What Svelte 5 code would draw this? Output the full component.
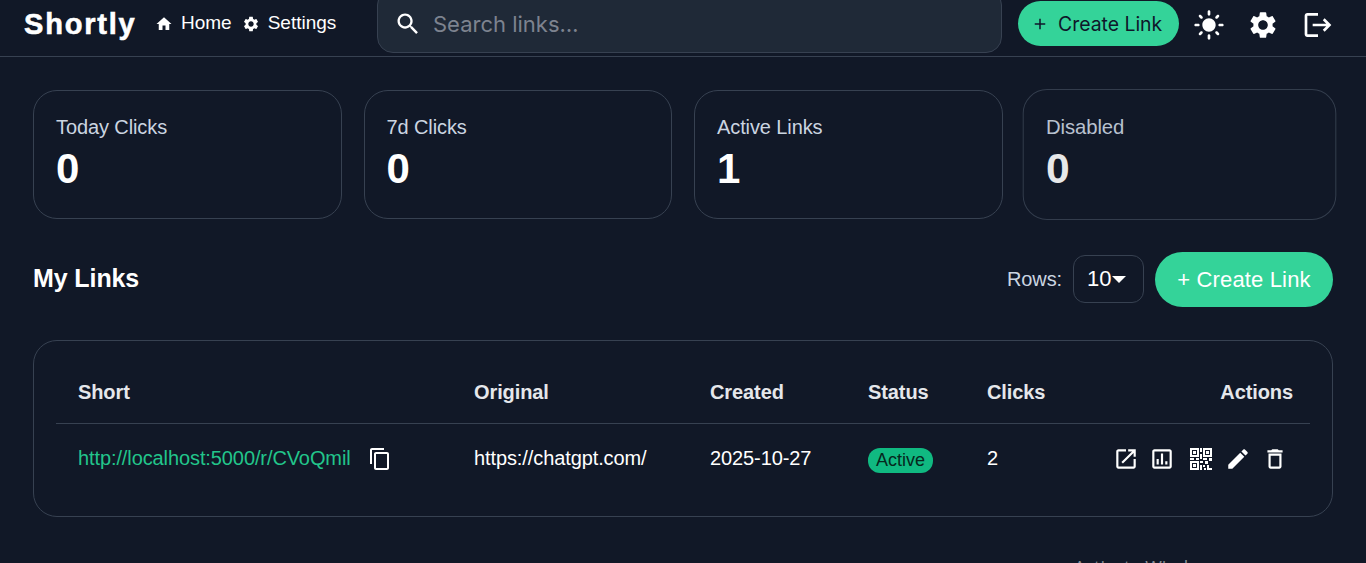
<script>
  const stats = [
    { label: "Today Clicks", value: 0 },
    { label: "7d Clicks", value: 0 },
    { label: "Active Links", value: 1 },
    { label: "Disabled", value: 0 },
  ];

  const gear =
    "M19.14 12.94c.04-.3.06-.61.06-.94 0-.32-.02-.64-.07-.94l2.03-1.58c.18-.14.23-.41.12-.61l-1.92-3.32c-.12-.22-.37-.29-.59-.22l-2.39.96c-.5-.38-1.03-.7-1.62-.94l-.36-2.54c-.04-.24-.24-.41-.48-.41h-3.84c-.24 0-.43.17-.47.41l-.36 2.54c-.59.24-1.13.57-1.62.94l-2.39-.96c-.22-.08-.47 0-.59.22L2.74 8.87c-.12.21-.08.47.12.61l2.03 1.58c-.05.3-.09.63-.09.94s.02.64.07.94l-2.03 1.58c-.18.14-.23.41-.12.61l1.92 3.32c.12.22.37.29.59.22l2.39-.96c.5.38 1.03.7 1.62.94l.36 2.54c.05.24.24.41.48.41h3.84c.24 0 .44-.17.47-.41l.36-2.54c.59-.24 1.13-.56 1.62-.94l2.39.96c.22.08.47 0 .59-.22l1.92-3.32c.12-.22.07-.47-.12-.61l-2.01-1.58zM12 15.6c-1.98 0-3.6-1.62-3.6-3.6s1.62-3.6 3.6-3.6 3.6 1.62 3.6 3.6-1.62 3.6-3.6 3.6z";

  const actions = [
    { box: "0 0 24 24", d: "M19 19H5V5h7V3H5c-1.11 0-2 .9-2 2v14c0 1.1.89 2 2 2h14c1.1 0 2-.9 2-2v-7h-2v7zM14 3v2h3.59l-9.83 9.83 1.41 1.41L19 6.41V10h2V3h-7z" },
    { box: "0 0 24 24", d: "M19 3H5c-1.1 0-2 .9-2 2v14c0 1.1.9 2 2 2h14c1.1 0 2-.9 2-2V5c0-1.1-.9-2-2-2zm0 16H5V5h14v14zM9 17H7v-5h2v5zm4 0h-2V7h2v10zm4 0h-2v-3h2v3z" },
    { box: "-1 -1 26 26", d: "M1 1h9v9H1V1zm2 2v5h5V3H3zm1 1h3v3H4V4zM14 1h9v9h-9V1zm2 2v5h5V3h-5zm1 1h3v3h-3V4zM1 14h9v9H1v-9zm2 2v5h5v-5H3zm1 1h3v3H4v-3zM11 1h2v4h-2V1zM11 7h2v5h-2V7zM1 11h4v2H1v-2zM7 11h3v2H7v-2zM14 11h4v2h-4v-2zM20 11h3v3h-3v-3zM11 14h3v2h-3v-2zM16 14h3v3h-3v-3zM11 18h2v5h-2v-5zM14 18h2v2h-2v-2zM18 18h2v3h3v2h-5v-5zM15 21h2v2h-2v-2z" },
    { box: "0 0 24 24", d: "M3 17.25V21h3.75L17.81 9.94l-3.75-3.75L3 17.25zM20.71 7.04c.39-.39.39-1.02 0-1.41l-2.34-2.34c-.39-.39-1.02-.39-1.41 0l-1.83 1.83 3.75 3.75 1.83-1.83z" },
    { box: "0 0 24 24", d: "M6 19c0 1.1.9 2 2 2h8c1.1 0 2-.9 2-2V7H6v12zM8 9h8v10H8V9zm7.5-5l-1-1h-5l-1 1H5v2h14V4z" },
  ];
</script>

<div class="page">
  <header class="topbar">
    <div class="brand">Shortly</div>
    <nav class="nav">
      <a href="#home">
        <svg viewBox="0 0 24 24" class="nav-icon"><path d="M10 20v-6h4v6h5v-8h3L12 3 2 12h3v8z" /></svg>
        Home
      </a>
      <a href="#settings">
        <svg viewBox="0 0 24 24" class="nav-icon"><path d={gear} /></svg>
        Settings
      </a>
    </nav>
    <div class="search">
      <svg viewBox="0 0 24 24" class="search-icon">
        <path d="M15.5 14h-.79l-.28-.27C15.41 12.59 16 11.11 16 9.5 16 5.91 13.09 3 9.5 3S3 5.91 3 9.5 5.91 16 9.5 16c1.61 0 3.09-.59 4.23-1.57l.27.28v.79l5 4.99L20.49 19l-4.99-5zm-6 0C7.01 14 5 11.99 5 9.5S7.01 5 9.5 5 14 7.01 14 9.5 11.99 14 9.5 14z" />
      </svg>
      <span>Search links…</span>
    </div>
    <button class="top-create" type="button">
      <svg viewBox="0 0 24 24"><path d="M19 13h-6v6h-2v-6H5v-2h6V5h2v6h6v2z" /></svg>
      Create Link
    </button>
    <div class="top-icons">
      <svg viewBox="0 0 24 24">
        <path d="M12 7c-2.76 0-5 2.24-5 5s2.24 5 5 5 5-2.24 5-5-2.24-5-5-5zM2 13h2c.55 0 1-.45 1-1s-.45-1-1-1H2c-.55 0-1 .45-1 1s.45 1 1 1zm18 0h2c.55 0 1-.45 1-1s-.45-1-1-1h-2c-.55 0-1 .45-1 1s.45 1 1 1zM11 2v2c0 .55.45 1 1 1s1-.45 1-1V2c0-.55-.45-1-1-1s-1 .45-1 1zm0 18v2c0 .55.45 1 1 1s1-.45 1-1v-2c0-.55-.45-1-1-1s-1 .45-1 1zM5.99 4.58c-.39-.39-1.03-.39-1.41 0-.39.39-.39 1.03 0 1.41l1.06 1.06c.39.39 1.03.39 1.41 0s.39-1.03 0-1.41L5.99 4.58zm12.37 12.37c-.39-.39-1.03-.39-1.41 0-.39.39-.39 1.03 0 1.41l1.06 1.06c.39.39 1.03.39 1.41 0 .39-.39.39-1.03 0-1.41l-1.06-1.06zm1.06-10.96c.39-.39.39-1.03 0-1.41-.39-.39-1.03-.39-1.41 0l-1.06 1.06c-.39.39-.39 1.03 0 1.41s1.03.39 1.41 0l1.06-1.06zM7.05 18.36c.39-.39.39-1.03 0-1.41-.39-.39-1.03-.39-1.41 0l-1.06 1.06c-.39.39-.39 1.03 0 1.41s1.03.39 1.41 0l1.06-1.06z" />
      </svg>
      <svg viewBox="0 0 24 24"><path d={gear} /></svg>
      <svg viewBox="0 0 24 24">
        <path d="M17 7l-1.41 1.41L18.17 11H8v2h10.17l-2.58 2.58L17 17l5-5zM4 5h8V3H4c-1.1 0-2 .9-2 2v14c0 1.1.9 2 2 2h8v-2H4V5z" />
      </svg>
    </div>
  </header>

  <main class="content">
    <section class="stats">
      {#each stats as stat}
        <div class="stat">
          <div class="stat-label">{stat.label}</div>
          <div class="stat-value">{stat.value}</div>
        </div>
      {/each}
    </section>

    <section class="toolbar">
      <h2>My Links</h2>
      <div class="toolbar-right">
        <span class="rows-label">Rows:</span>
        <div class="rows-select">10<span class="caret"></span></div>
        <button class="create" type="button">+ Create Link</button>
      </div>
    </section>

    <section class="table-card">
      <table>
        <colgroup>
          <col style="width: 396px" />
          <col style="width: 236px" />
          <col style="width: 158px" />
          <col style="width: 119px" />
          <col style="width: 100px" />
          <col />
        </colgroup>
        <thead>
          <tr>
            <th>Short</th>
            <th>Original</th>
            <th>Created</th>
            <th>Status</th>
            <th>Clicks</th>
            <th class="right">Actions</th>
          </tr>
        </thead>
        <tbody>
          <tr>
            <td>
              <div class="short">
                <a href="#short">http://localhost:5000/r/CVoQmil</a>
                <svg viewBox="0 0 24 24" class="copy">
                  <path d="M16 1H4c-1.1 0-2 .9-2 2v14h2V3h12V1zm3 4H8c-1.1 0-2 .9-2 2v14c0 1.1.9 2 2 2h11c1.1 0 2-.9 2-2V7c0-1.1-.9-2-2-2zm0 16H8V7h11v14z" />
                </svg>
              </div>
            </td>
            <td>https://chatgpt.com/</td>
            <td>2025-10-27</td>
            <td><span class="badge">Active</span></td>
            <td>2</td>
            <td>
              <div class="actions">
                {#each actions as icon}
                  <svg viewBox={icon.box}><path d={icon.d} /></svg>
                {/each}
              </div>
            </td>
          </tr>
        </tbody>
      </table>
    </section>
  </main>

  <div class="watermark">Activate Windows</div>
</div>

<style>
  :global(body) {
    margin: 0;
    background: #111827;
  }

  .page {
    position: relative;
    height: 563px;
    overflow: hidden;
    background: #111827;
    color: #fff;
    font-family: "Liberation Sans", Arial, sans-serif;
    font-size: 20px;
    letter-spacing: -0.1px;
  }

  svg {
    fill: currentColor;
    display: block;
    flex: none;
  }

  .topbar {
    display: flex;
    align-items: flex-end;
    height: 56px;
    box-sizing: content-box;
    border-bottom: 1px solid #374151;
    padding-left: 24px;
  }

  .brand {
    width: 131px;
    align-self: flex-start;
    margin-top: 7px;
    font-size: 29px;
    line-height: 34px;
    font-weight: 700;
    letter-spacing: 1.8px;
    -webkit-text-stroke: 0.6px #fff;
  }

  .nav {
    display: flex;
    gap: 10px;
    align-self: flex-start;
    margin-top: 13px;
    width: 222px;
    font-size: 19px;
    letter-spacing: 0;
  }

  .nav a {
    display: flex;
    align-items: center;
    gap: 8px;
    color: #fff;
    text-decoration: none;
    line-height: 20px;
  }

  .nav-icon {
    width: 18px;
    height: 18px;
    margin-top: 2px;
  }

  .search {
    display: flex;
    align-items: center;
    gap: 11px;
    box-sizing: border-box;
    width: 625px;
    height: 64px;
    margin-bottom: 3px;
    padding: 5px 16px 0;
    background: #1f2937;
    border: 1px solid #374151;
    border-radius: 16px;
    font-family: Inter, sans-serif;
    font-size: 22px;
    letter-spacing: 0;
    flex: none;
  }

  .search span {
    color: #7d838f;
  }

  .search-icon {
    width: 28px;
    height: 28px;
  }

  .top-create {
    display: flex;
    align-items: center;
    gap: 9px;
    box-sizing: border-box;
    width: 161px;
    height: 45px;
    margin: 0 0 10px 16px;
    padding: 0 0 0 13px;
    border: none;
    border-radius: 23px;
    background: #34d399;
    color: #0f172a;
    font-family: Inter, sans-serif;
    font-size: 19.4px;
    flex: none;
  }

  .top-create svg {
    width: 18px;
    height: 18px;
  }

  .top-icons {
    display: flex;
    gap: 23px;
    margin: 0 0 15px 14px;
  }

  .top-icons svg {
    width: 32px;
    height: 32px;
  }

  .top-icons svg:first-child {
    margin-right: -1px;
  }

  .content {
    padding: 33px 33px 0;
  }

  .stats {
    display: grid;
    grid-template-columns: repeat(4, 1fr);
    gap: 22px;
  }

  .stat {
    box-sizing: border-box;
    height: 129px;
    padding: 22px;
    border: 1px solid #374151;
    border-radius: 24px;
  }

  .stat:last-child {
    transform: scale(1.015);
    opacity: 0.9;
  }

  .stat-label {
    color: #cbd5e1;
    line-height: 28px;
  }

  .stat-value {
    margin-top: 5px;
    font-size: 42px;
    font-weight: 700;
    line-height: 46px;
  }

  .toolbar {
    display: flex;
    align-items: center;
    justify-content: space-between;
    height: 55px;
    margin-top: 33px;
  }

  h2 {
    margin: 0 0 3px;
    font-size: 25px;
    font-weight: 700;
  }

  .toolbar-right {
    display: flex;
    align-items: center;
  }

  .rows-label {
    color: #cbd5e1;
    margin-right: 11px;
  }

  .rows-select {
    display: flex;
    align-items: center;
    box-sizing: border-box;
    width: 71px;
    height: 48px;
    margin-top: -1px;
    padding-left: 13px;
    border: 1px solid #374151;
    border-radius: 12px;
    font-size: 22px;
    letter-spacing: 0;
  }

  .caret {
    width: 0;
    height: 0;
    margin-left: 1px;
    border-left: 7px solid transparent;
    border-right: 7px solid transparent;
    border-top: 7px solid #fff;
  }

  .create {
    box-sizing: border-box;
    width: 178px;
    height: 55px;
    margin-left: 11px;
    border: none;
    border-radius: 28px;
    background: #34d399;
    color: #fff;
    font-family: inherit;
    font-size: 22px;
    letter-spacing: 0.15px;
  }

  .table-card {
    box-sizing: border-box;
    height: 177px;
    margin-top: 33px;
    padding: 0 22px;
    border: 1px solid #374151;
    border-radius: 24px;
  }

  table {
    width: 100%;
    table-layout: fixed;
    border-collapse: collapse;
  }

  th,
  td {
    padding: 0 0 0 22px;
    text-align: left;
    white-space: nowrap;
  }

  th {
    height: 82px;
    padding-top: 22px;
    box-sizing: border-box;
    border-bottom: 1px solid #374151;
    color: #e5e7eb;
    font-weight: 700;
  }

  th.right {
    padding-right: 17px;
    text-align: right;
  }

  td {
    height: 70px;
  }

  .short {
    display: flex;
    align-items: center;
    gap: 17px;
  }

  .short a {
    color: #22c58b;
    text-decoration: none;
  }

  .copy {
    width: 24px;
    height: 24px;
  }

  .badge {
    display: inline-block;
    margin-top: 3px;
    padding: 2px 8px;
    border-radius: 12px;
    background: #10b981;
    color: #06281d;
    font-size: 18px;
    letter-spacing: 0;
  }

  .actions {
    display: flex;
    justify-content: flex-end;
    gap: 11px;
    padding-right: 22px;
  }

  .actions svg {
    width: 26px;
    height: 26px;
  }

  .actions svg:nth-child(1) {
    margin-right: -1px;
  }

  .actions svg:nth-child(2) {
    margin-right: 2px;
  }

  .watermark {
    position: absolute;
    left: 1074px;
    top: 555px;
    color: #8a8f98;
    font-family: "Open Sans", sans-serif;
    font-size: 18px;
    line-height: 24px;
    letter-spacing: 0;
  }
</style>
